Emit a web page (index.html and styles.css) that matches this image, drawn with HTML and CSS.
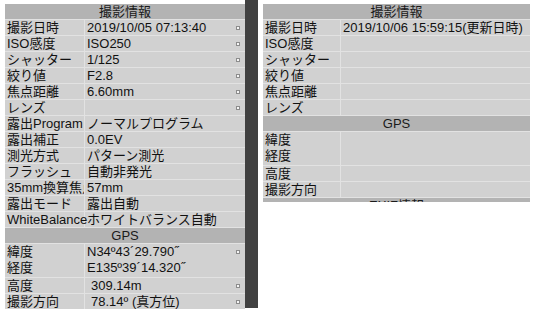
FILE: index.html
```html
<!DOCTYPE html>
<html lang="ja">
<head>
<meta charset="utf-8">
<title>撮影情報</title>
<link rel="stylesheet" href="styles.css">
</head>
<body>
<div class="page">
  <div class="viewer">
    <div class="sheet sheet--left">
      <div class="head">撮影情報</div>
      <div class="row"><div class="key">撮影日時</div><div class="val"><span>2019/10/05 07:13:40</span><i class="mark"></i></div></div>
      <div class="row"><div class="key">ISO感度</div><div class="val"><span>ISO250</span><i class="mark"></i></div></div>
      <div class="row"><div class="key">シャッター</div><div class="val"><span>1/125</span><i class="mark"></i></div></div>
      <div class="row"><div class="key">絞り値</div><div class="val"><span>F2.8</span><i class="mark"></i></div></div>
      <div class="row"><div class="key">焦点距離</div><div class="val"><span>6.60mm</span><i class="mark"></i></div></div>
      <div class="row"><div class="key">レンズ</div><div class="val"><span></span><i class="mark"></i></div></div>
      <div class="row"><div class="key">露出Program</div><div class="val"><span>ノーマルプログラム</span></div></div>
      <div class="row"><div class="key">露出補正</div><div class="val"><span>0.0EV</span></div></div>
      <div class="row"><div class="key">測光方式</div><div class="val"><span>パターン測光</span></div></div>
      <div class="row"><div class="key">フラッシュ</div><div class="val"><span>自動非発光</span></div></div>
      <div class="row"><div class="key">35mm換算焦点距離</div><div class="val"><span>57mm</span></div></div>
      <div class="row"><div class="key">露出モード</div><div class="val"><span>露出自動</span></div></div>
      <div class="row"><div class="key key--wide">WhiteBalance</div><div class="val"><span>ホワイトバランス自動</span></div></div>
      <div class="head head--sub">GPS</div>
      <div class="row row--double">
        <div class="key"><div class="line">緯度</div><div class="line">経度</div></div>
        <div class="val val--stack">
          <div class="line"><span>N34º43´29.790˝</span><i class="mark"></i></div>
          <div class="line"><span>E135º39´14.320˝</span></div>
        </div>
      </div>
      <div class="row"><div class="key">高度</div><div class="val val--indent"><span>309.14m</span><i class="mark"></i></div></div>
      <div class="row"><div class="key">撮影方向</div><div class="val val--indent"><span>78.14º (真方位)</span><i class="mark"></i></div></div>
    </div>
    <div class="scrollbar"></div>
  </div>

  <div class="sheet sheet--right">
    <div class="head">撮影情報</div>
    <div class="row"><div class="key">撮影日時</div><div class="val"><span>2019/10/06 15:59:15(更新日時)</span></div></div>
    <div class="row"><div class="key">ISO感度</div><div class="val"></div></div>
    <div class="row"><div class="key">シャッター</div><div class="val"></div></div>
    <div class="row"><div class="key">絞り値</div><div class="val"></div></div>
    <div class="row"><div class="key">焦点距離</div><div class="val"></div></div>
    <div class="row"><div class="key">レンズ</div><div class="val"></div></div>
    <div class="head head--sub">GPS</div>
    <div class="row row--double">
      <div class="key"><div class="line">緯度</div><div class="line">経度</div></div>
      <div class="val"></div>
    </div>
    <div class="row"><div class="key">高度</div><div class="val"></div></div>
    <div class="row"><div class="key">撮影方向</div><div class="val"></div></div>
    <div class="head head--sub">EXIF情報</div>
  </div>
</div>
</body>
</html>
```
FILE: styles.css
```css
html, body {
  margin: 0;
  padding: 0;
  background: #ffffff;
}

body {
  font-family: "Liberation Sans", "Noto Sans CJK JP", sans-serif;
  font-size: 13px;
  color: #111111;
}

.page {
  display: flex;
  align-items: flex-start;
  padding-left: 5px;
}

.viewer {
  display: flex;
  align-items: flex-start;
}

.sheet {
  margin-top: 4px;
  background: #d1d1d1;
  overflow: hidden;
}

.sheet--left {
  width: 240px;
}

.sheet--right {
  margin-left: 5px;
  width: 267px;
  height: 198px;
}

.scrollbar {
  width: 13px;
  height: 308px;
  background: #414141;
}

.head {
  height: 15px;
  line-height: 15px;
  background: #b3b3b3;
  text-align: center;
  color: #1a1a1a;
}

.head--sub {
  border-top: 1px solid #e2e2e2;
}

.row {
  display: grid;
  grid-template-columns: 80px 1fr;
  border-top: 1px solid #e2e2e2;
  height: 15px;
  line-height: 15px;
}

.sheet--right .row {
  grid-template-columns: 78px 1fr;
}

.row--double {
  height: 33px;
}

.line {
  height: 16px;
  line-height: 16px;
}

.key {
  padding-left: 2px;
  white-space: nowrap;
  overflow: hidden;
  border-right: 1px solid #e2e2e2;
}

.key--wide {
  overflow: visible;
  position: relative;
  z-index: 1;
}

.val {
  display: flex;
  align-items: center;
  padding-left: 2px;
  padding-right: 5px;
  white-space: nowrap;
  overflow: hidden;
}

.val--stack {
  flex-direction: column;
  align-items: stretch;
}

.val--stack .line {
  display: flex;
  align-items: center;
}

.val--indent {
  padding-left: 6px;
}

.mark {
  margin-left: auto;
  width: 2px;
  height: 2px;
  border: 1px solid #8c8c8c;
  background: #f6f6f6;
  flex: none;
}
```
